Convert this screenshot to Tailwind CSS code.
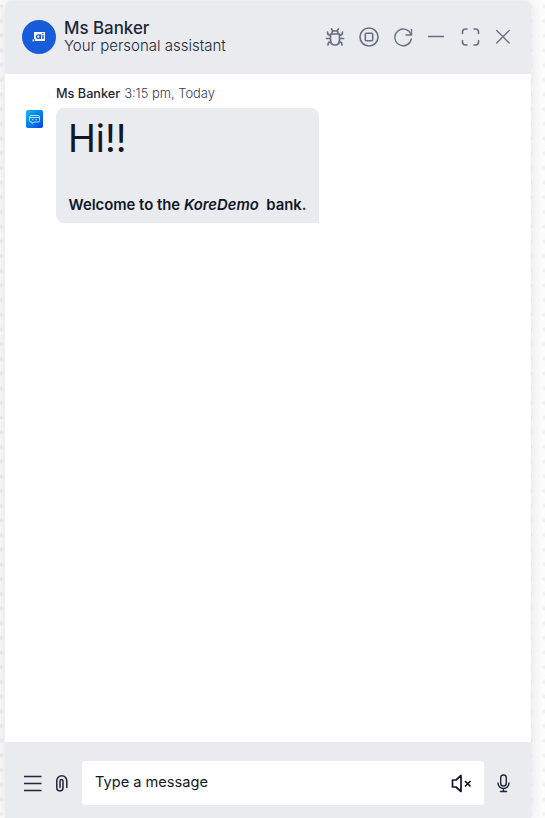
<!DOCTYPE html>
<html lang="en">
<head>
<meta charset="utf-8">
<title>Ms Banker</title>
<script src="https://cdn.jsdelivr.net/npm/@tailwindcss/browser@4"></script>
</head>
<body class="h-[818px] w-[545px] overflow-hidden bg-[#fdfdfd] bg-[radial-gradient(circle_at_center,#f0f0f2_1.5px,transparent_2.5px)] bg-[length:14.7px_14.7px] bg-[position:-6px_-1px] pl-[5px] pt-px font-['Inter',sans-serif] text-[#101828]">
<main class="flex h-[817px] w-[526px] flex-col overflow-hidden rounded-t-[6px] bg-white shadow-[0_0_16px_rgba(0,0,0,0.12)]">
  <header class="flex h-[73px] shrink-0 items-center bg-[#eaebef] pb-[2px] pl-[17px] pr-[17px]">
    <div class="flex size-[34px] shrink-0 items-center justify-center rounded-full bg-[#175cd9]">
      <svg width="14" height="12" viewBox="0 0 14 12"><path d="M2 1h11v9H3V8H2z" fill="#fff"/><rect x="0.500" y="8.500" width="1.800" height="1.800" fill="#fff"/><circle cx="6.300" cy="5.700" r="1.800" fill="none" stroke="#175cd9" stroke-width="1.300"/><path d="M8.500 3.200v4.700M11 4v3.900M11 2v1.300" stroke="#175cd9" stroke-width="1.400"/></svg>
    </div>
    <div class="ml-2 flex-1 whitespace-nowrap">
      <h1 class="text-[16.9px] font-medium leading-[18px] text-[#1d2739]">Ms Banker</h1>
      <p class="text-[15px] font-light leading-[18px] text-[#1d2739]">Your personal assistant</p>
    </div>
    <div class="flex items-center gap-[13.6px] pr-[0.6px] text-[#667085]">
      <svg width="20" height="20" viewBox="0 0 20 20" fill="none" stroke="currentColor" stroke-width="1.7" stroke-linecap="round" stroke-linejoin="round"><path d="M5.500 7h9v6q0 5-4.500 5t-4.500-5zM7 7V6q0-2 2-2h2q2 0 2 2v1M8 4 6.500 2M12 4l1.500-2M5.500 8.500 3 7.500 2.500 5M14.500 8.500l2.500-1 .5-2.500M5.500 11.500h-4M14.500 11.500h4M6 14.500l-2.500 1L3 18M14 14.500l2.500 1 .5 2.500"/></svg>
      <svg width="20" height="20" viewBox="0 0 20 20" fill="none" stroke="currentColor" stroke-width="1.600"><circle cx="10" cy="10" r="9"/><rect x="6.300" y="6.300" width="7.400" height="7.400" rx="1"/></svg>
      <svg width="20" height="20" viewBox="0 0 20 20" fill="none" stroke="currentColor" stroke-width="1.4" stroke-linecap="round" stroke-linejoin="round"><path d="M18.500 2.500V8H13M18 7.700A8.300 8.300 0 1 0 18.300 12"/></svg>
      <svg width="20" height="20" viewBox="0 0 20 20" fill="none" stroke="currentColor" stroke-width="1.3" stroke-linecap="round"><path d="M2.500 9.500h15"/></svg>
      <svg width="20" height="20" viewBox="0 0 20 20" fill="none" stroke="currentColor" stroke-width="1.6" stroke-linecap="round"><path d="M7 2H5.500Q2.500 2 2.500 5v1.500M14 2h1.500q3 0 3 3v1.500M18.500 13.500V15q0 3-3 3H14M7 18H5.500q-3 0-3-3v-1.500"/></svg>
      <svg width="20" height="20" viewBox="0 0 20 20" fill="none" stroke="currentColor" stroke-width="1.3" stroke-linecap="round"><path d="m3.700 3.500 12.500 12.500M16.200 3.500 3.700 16"/></svg>
    </div>
  </header>
  <section class="flex-1 pl-[21px] pt-[11px]">
    <div class="ml-[30px] flex h-[18px] items-baseline gap-1 whitespace-nowrap leading-[18px]"><span class="text-[12.7px] font-medium text-[#1d2739]">Ms Banker</span><span class="text-[12.900px] font-light text-[#344054]">3:15 pm, Today</span></div>
    <div class="mt-[5px] flex items-start">
      <div class="mt-[2px] flex h-[18px] w-[17px] items-center justify-center rounded-[2px] bg-linear-to-br from-[#27b7ef] to-[#0640df]">
        <svg width="13" height="12" viewBox="0 0 13 12" fill="none" stroke="#b9defc" stroke-width="1"><path d="M3 2.500h7q1.500 0 1.500 1.500v3.500Q11.500 9 10 9H6l-2 1.500V9H3Q1.500 9 1.500 7.500V4Q1.500 2.500 3 2.500zM2 4.500h9M4 6.700h1.500M7.500 6.700H9"/></svg>
      </div>
      <article class="ml-[13px] h-[115px] w-[263px] rounded-[8px] rounded-br-none bg-[#eaebef] pl-[12.500px] pt-[7px]">
        <h2 class="-ml-[0.5px] text-[37.5px] font-normal leading-[48px]">Hi!!</h2>
        <p class="mt-[32px] whitespace-pre text-[14.85px] font-semibold leading-[20px]">Welcome to the <i>KoreDemo</i>  bank.</p>
      </article>
    </div>
  </section>
  <footer class="flex h-[76px] shrink-0 items-center bg-[#eaebef] pb-px pl-[18px] pt-[7px]">
    <svg width="20" height="20" viewBox="0 0 20 20" fill="none" stroke="#1d2739" stroke-width="1.3"><path d="M1 3.500h17.500M1 10.500h17.500M1 17.500h17.500"/></svg>
    <svg class="ml-[9px]" width="20" height="20" viewBox="0 0 20 20" fill="none" stroke="#1d2739" stroke-width="1.500" stroke-linecap="round"><path d="M14.800 14.500V7.700a5 5 0 0 0-10 0v7.100a3.100 3.100 0 0 0 6.200 0V8a1.500 1.500 0 0 0-3 0v6.500"/></svg>
    <div class="ml-[10px] flex h-[44px] w-[402px] items-center rounded-[3px] bg-white pl-[13px] pr-[11px]">
      <span class="flex-1 pb-[2px] text-[14.6px] font-normal leading-[22px]">Type a message</span>
      <svg width="22" height="20" viewBox="0 0 22 20" fill="none" stroke="#101828" stroke-width="1.700" stroke-linejoin="round"><path d="M1.500 7H5l5-4.500v16L5 14H1.500zM14 8l5.500 5.500M19.500 8 14 13.500"/></svg>
    </div>
    <svg class="ml-[9px]" width="20" height="20" viewBox="0 0 20 20" fill="none" stroke="#1d2739" stroke-width="1.4" stroke-linecap="round"><rect x="7.700" y="2" width="5.600" height="11" rx="2.800"/><path d="M5 10a5.500 5.500 0 0 0 11 0M10.500 15.500v3M7.500 18.500h6"/></svg>
  </footer>
</main>
</body>
</html>
